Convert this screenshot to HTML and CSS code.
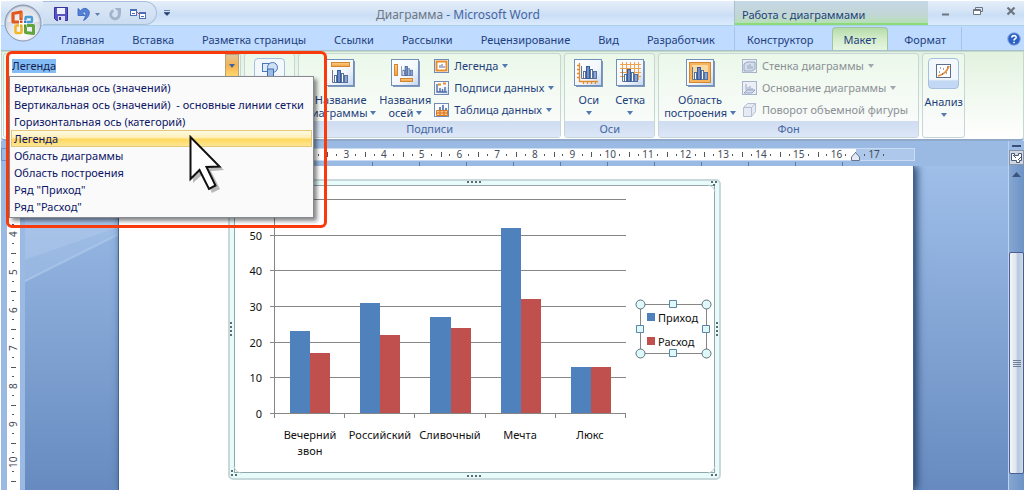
FILE: index.html
```html
<!DOCTYPE html>
<html lang="ru">
<head>
<meta charset="utf-8">
<title>Диаграмма - Microsoft Word</title>
<link rel="stylesheet" href="styles.css">
</head>
<body>
<svg class="defs" aria-hidden="true">
  <defs>
    <linearGradient id="paper" x1="0" y1="0" x2="1" y2="1"><stop offset="0" stop-color="#fff"/><stop offset=".6" stop-color="#f3f7fd"/><stop offset="1" stop-color="#c3d6f0"/></linearGradient>
    <linearGradient id="orange" x1="0" y1="0" x2="0" y2="1"><stop offset="0" stop-color="#fbd08a"/><stop offset="1" stop-color="#f0a040"/></linearGradient>
    <symbol id="sheet" viewBox="0 0 29 28"><path d="M2 27.500H28.500V2" fill="none" stroke="#8098bd" stroke-width="2"/><rect x=".5" y=".5" width="27" height="26" fill="url(#paper)" stroke="#7390bb"/></symbol>
    <symbol id="bars" viewBox="0 0 16 13"><path d="M.5 0v12.500H16" fill="none" stroke="#67778f"/><rect x="2.500" y="5.500" width="2" height="7" fill="#fff" stroke="#56719d"/><rect x="5.500" y=".5" width="3" height="12" fill="#6e8fca" stroke="#3c5c96"/><rect x="9.500" y="3.500" width="2" height="9" fill="#fff" stroke="#56719d"/><rect x="12.500" y="5.500" width="3" height="7" fill="#88a5d7" stroke="#56719d"/></symbol>
  </defs>
</svg>
<div class="window">
  <header class="chrome">
    <div class="titlebar">
      <div class="quick">
        <button class="tool" aria-label="Сохранить"><svg width="14" height="14"><path d="M.5.5h13v13h-11l-2-2z" fill="#5a55c0" stroke="#37339a"/><rect x="3" y="1" width="8" height="6" fill="#eef2ff"/><rect x="4" y="9" width="7" height="5" fill="#d6dcf4"/><rect x="5" y="10" width="2" height="3" fill="#37339a"/></svg></button>
        <button class="tool undo" aria-label="Отменить"><svg width="13" height="14"><path d="M1 1.500v7h7L5.500 6C8 3.500 10.500 6 7.500 11.500l-1 2C13.500 10 14 3 9 1.500 7 1 5 2 3.500 3.800z" fill="#5580d8" stroke="#3360b8" stroke-width=".8"/></svg></button>
        <button class="tool more" aria-label="Список отмены"><svg width="5" height="3"><path d="M0 0h5L2.500 3z" fill="#5c7db0"/></svg></button>
        <button class="tool redo" aria-label="Повторить"><svg width="12" height="13"><path d="M4.500 2.500A4.300 4.300 0 1 0 9.500 4" fill="none" stroke="#a3b3ca" stroke-width="2.800"/><path d="M5.500 0H12v6.500z" fill="#a3b3ca"/></svg></button>
        <button class="tool" aria-label="Связать надписи"><svg width="17" height="13"><rect x=".5" y="1.500" width="6" height="6" fill="#fff" stroke="#4a6fb8"/><path d="M0 2.500h7M2 5.500h3" stroke="#4a6fb8"/><rect x="9.500" y="4.500" width="6" height="6" fill="#fff" stroke="#4a6fb8"/><path d="M9 5.500h7M11 8.500h3" stroke="#4a6fb8"/><path d="M7 4l3 3" stroke="#d44"/></svg></button>
      </div>
      <button class="tool customize" aria-label="Настройка панели"><svg width="6" height="6"><path d="M0 .5h6M0 2.500h6L3 5.500z" fill="#223e72" stroke="#223e72" stroke-width=".6"/></svg></button>
      <h1 class="caption"><span class="doc">Диаграмма</span> - Microsoft Word</h1>
      <div class="context">Работа с диаграммами</div>
      <div class="controls">
        <button class="tool" aria-label="Свернуть"><svg width="9" height="10"><path d="M1 8.500h7" stroke="#6e7680" stroke-width="2"/></svg></button>
        <button class="tool" aria-label="Восстановить"><svg width="10" height="9"><path d="M2.500 2V.5h7v4H8" fill="none" stroke="#6e7680"/><path d="M.5 2.500h7v5h-7zM0 3.500h8" fill="#fff" stroke="#6e7680"/></svg></button>
        <button class="tool" aria-label="Закрыть"><svg width="10" height="9"><path d="M1.500.5l7 7M8.500.5l-7 7" stroke="#6e7680" stroke-width="2.200"/></svg></button>
      </div>
    </div>
    <nav class="tabs">
      <button class="tab">Главная</button>
      <button class="tab">Вставка</button>
      <button class="tab">Разметка страницы</button>
      <button class="tab">Ссылки</button>
      <button class="tab">Рассылки</button>
      <button class="tab">Рецензирование</button>
      <button class="tab">Вид</button>
      <button class="tab">Разработчик</button>
      <div class="chart-tabs">
        <button class="tab">Конструктор</button>
        <button class="tab active">Макет</button>
        <button class="tab">Формат</button>
      </div>
      <button class="tool help" aria-label="Справка"><svg width="14" height="14"><circle cx="7" cy="7" r="6.300" fill="#2c62c4" stroke="#8fb0e4"/><path d="M4.800 5.500C5 3 9.300 3 9.200 5.400 9 7 7 7 7 8.600M7 9.800v1.400" fill="none" stroke="#fff" stroke-width="1.600"/></svg></button>
    </nav>
    <button class="orb" aria-label="Кнопка Office"><svg width="38" height="38" viewBox="0 0 38 38">
      <defs><radialGradient id="glass" cx=".5" cy=".8" r=".8"><stop offset="0" stop-color="#fff"/><stop offset=".5" stop-color="#dfe5ef"/><stop offset="1" stop-color="#aab6ca"/></radialGradient></defs>
      <circle cx="19" cy="19" r="18" fill="url(#glass)" stroke="#8794ab"/><path d="M3 18a16 15.500 0 0 1 32 0z" fill="#fff" opacity=".5"/>
      <g fill="none" stroke-linejoin="round"><path d="M17 18H9V9.500L17 8z" stroke="#e2571c" stroke-width="3.200"/><path d="M17.500 14V9" stroke="#f07a22" stroke-width="2"/><rect x="21.500" y="13" width="6.500" height="5" rx="1" stroke="#4a9ad4" stroke-width="2.400"/><rect x="11.500" y="21.500" width="6" height="7.500" rx="1" stroke="#f3b72a" stroke-width="2.600"/><path d="M21.500 21.500h8v8L21.500 28.500z" stroke="#63a53a" stroke-width="3"/></g>
      <path d="M15 16h8v7h-8z" fill="#fff"/><path d="M16 16.500h2.500v2.500H16z" fill="#d9481c"/><path d="M20 16.500h2.500v2.500H20z" fill="#2f7cc0"/><path d="M16 20.500h2.500V23H16z" fill="#eaa51c"/><path d="M20 20.500h2.500V23H20z" fill="#4f9430"/>
    </svg></button>
  </header>

  <section class="ribbon">
    <div class="group current">
      <div class="combo">
        <input class="combo-text" role="combobox" aria-label="Элементы диаграммы" aria-expanded="true" aria-controls="elements" value="Легенда">
        <button class="combo-arrow" aria-label="Открыть список"><svg width="6" height="4"><path d="M0 0h6L3 4z" fill="#3f64a6"/></svg></button>
      </div>
      <ul class="list" id="elements" role="listbox">
        <li role="option">Вертикальная ось (значений)</li>
        <li role="option">Вертикальная ось (значений)&nbsp; - основные линии сетки</li>
        <li role="option">Горизонтальная ось (категорий)</li>
        <li role="option" class="hot" aria-selected="true">Легенда</li>
        <li role="option">Область диаграммы</li>
        <li role="option">Область построения</li>
        <li role="option">Ряд "Приход"</li>
        <li role="option">Ряд "Расход"</li>
      </ul>
      <div class="marker"></div>
      <svg class="pointer" width="38" height="60" viewBox="0 0 38 60"><path d="M4 5v43l10-9 9 19 8-4-9-18 13-1z" fill="#777" opacity=".5"/><path d="M1.500 2v42l9-9 9.500 19 6.500-3.500-9-18.500 13-.5z" fill="#fff" stroke="#111" stroke-width="2"/></svg>
    </div>
    <div class="group shapes">
      <button class="chip" aria-label="Вставить"><svg width="18" height="20"><rect x="1.500" y="2.500" width="10" height="8" fill="#dfeafa" stroke="#4878b8"/><circle cx="11.500" cy="6.500" r="5" fill="#cfdff5" stroke="#4878b8"/><path d="M6.500 8v10h6V8z" fill="#9cbce8" stroke="#3e6cae"/></svg></button>
    </div>
    <div class="group captions">
      <div class="tools labels">
        <button class="large"><svg width="29" height="28"><use href="#sheet"/><rect x="5.500" y="3.500" width="18" height="4" fill="url(#orange)" stroke="#d5852e"/><use href="#bars" x="6" y="11" width="16" height="13"/></svg><span>Название<br>диаграммы <i class="arr"></i></span></button>
        <button class="large"><svg width="29" height="28"><use href="#sheet"/><rect x="3.500" y="5.500" width="3" height="11" fill="url(#orange)" stroke="#d5852e"/><use href="#bars" x="10" y="7" width="12" height="10"/><rect x="9.500" y="19.500" width="12" height="3" fill="url(#orange)" stroke="#d5852e"/></svg><span>Названия<br>осей <i class="arr"></i></span></button>
        <div class="stack">
          <button class="small"><svg width="16" height="14"><rect x=".5" y=".5" width="14" height="13" fill="#fff" stroke="#6f8bb6"/><rect x="2.500" y="2.500" width="10" height="9" fill="none" stroke="#e88f2c" stroke-width="2"/><path d="M6 9V6M8 9V5M10 9V7" stroke="#54689c"/></svg>Легенда <i class="arr"></i></button>
          <button class="small"><svg width="16" height="14"><rect x=".5" y=".5" width="14" height="13" fill="url(#paper)" stroke="#6f8bb6"/><path d="M3 3v8h10M6 11V7M8.500 11V8M11 11V6" fill="none" stroke="#4d6ca5" stroke-width="1.400"/><path d="M4 3.500h3M9 2.500h3" stroke="#e88f2c" stroke-width="2"/></svg>Подписи данных <i class="arr"></i></button>
          <button class="small"><svg width="16" height="14"><rect x=".5" y=".5" width="14" height="13" fill="url(#paper)" stroke="#6f8bb6"/><path d="M6 8V4M9 8V2M12 8V5" stroke="#4d6ca5" stroke-width="1.600"/><path d="M2.500 7.500h11v5h-11z" fill="#f8c890" stroke="#e07c20"/><path d="M2 10h12M6 7v6M10 7v6" stroke="#d56c18"/></svg>Таблица данных <i class="arr"></i></button>
        </div>
      </div>
      <div class="name">Подписи</div>
    </div>
    <div class="group">
      <div class="tools axes">
        <button class="large"><svg width="29" height="28"><use href="#sheet"/><path d="M5.500 4v18.500H24M3 6.500h3M3 10.500h3M3 14.500h3M3 18.500h3M9.500 22v3M13.500 22v3M17.500 22v3M21.500 22v3" fill="none" stroke="#e38a2c" stroke-width="1.300"/><use href="#bars" x="7" y="7" width="16" height="13"/></svg><span>Оси<br><i class="arr"></i></span></button>
        <button class="large"><svg width="29" height="28"><use href="#sheet"/><path d="M4 5.500h21M4 9.500h21M4 13.500h21M4 17.500h21M6.500 3v18M10.500 3v18M14.500 3v18M18.500 3v18M22.500 3v18" stroke="#eda24b"/><use href="#bars" x="6" y="10" width="16" height="13"/></svg><span>Сетка<br><i class="arr"></i></span></button>
      </div>
      <div class="name">Оси</div>
    </div>
    <div class="group walls">
      <div class="tools back">
        <button class="large"><svg width="29" height="28"><use href="#sheet"/><rect x="3.500" y="3.500" width="21" height="20" fill="#f6b65e" stroke="#d5852e"/><rect x="6" y="6" width="16" height="15" fill="#fbd9a2"/><use href="#bars" x="6" y="8" width="16" height="13"/></svg><span>Область<br>построения <i class="arr"></i></span></button>
        <div class="stack">
          <button class="small" disabled><svg width="16" height="14"><rect x=".5" y=".5" width="14" height="13" fill="#eceff5" stroke="#a7b4cb"/><path d="M2 12V5l3-2h8v7l-3 2zM6 10V6M8 10V5M10 10V7" fill="#d6deeb" stroke="#94a5c2"/></svg>Стенка диаграммы <i class="arr"></i></button>
          <button class="small" disabled><svg width="16" height="14"><rect x=".5" y=".5" width="14" height="13" fill="#eceff5" stroke="#a7b4cb"/><path d="M2 12l3-3h8l-3 3zM4 9V3M6 9V6M8 9V5M10 9V7" fill="#d6deeb" stroke="#94a5c2"/></svg>Основание диаграммы <i class="arr"></i></button>
          <button class="small" disabled><svg width="16" height="14"><path d="M1.500 4.500l4-4h8v8l-4 5h-8zM1.500 4.500h8v9M9.500 4.500l4-4" fill="#e6ebf3" stroke="#b3bfd3"/></svg>Поворот объемной фигуры</button>
        </div>
      </div>
      <div class="name">Фон</div>
    </div>
    <div class="group analysis">
      <button class="large"><span class="chip"><svg width="15" height="14"><rect x=".5" y=".5" width="14" height="13" fill="#fff" stroke="#5b6e90"/><path d="M2 12C6 11 11 8 13 2" fill="none" stroke="#e88a34" stroke-width="1.600"/><path d="M3 8h1M6 10h1M7 5h1M10 9h1M11 3h1M4 4h1" stroke="#445"/></svg></span><span>Анализ<br><i class="arr"></i></span></button>
    </div>
  </section>

  <main class="work">
    <div class="desk">
      <div class="top-ruler">
        <div class="corner"></div>
        <div class="scale">
          <span></span><span></span><span>3</span><span>4</span><span>5</span><span>6</span><span>7</span><span>8</span><span>9</span><span>10</span><span>11</span><span>12</span><span>13</span><span>14</span><span>15</span><span>16</span><span>17</span>
          <svg class="indent" width="9" height="9"><path d="M.5 8.500V5l4-4.500 4 4.500v3.500z" fill="#e4ebf6" stroke="#66758f"/></svg>
        </div>
        <div class="stops"></div>
      </div>
      <div class="canvas">
        <div class="side-ruler"><span></span><span>4</span><span>5</span><span>6</span><span>7</span><span>8</span><span>9</span><span>10</span><span></span></div>
        <div class="backdrop">
          <svg class="sweep" width="94" height="120"><path d="M0 0h94v61L0 94z" fill="#c2d8f3" opacity=".4"/><path d="M0 94L94 61v6L0 115z" fill="#bdd3f0" opacity=".25"/><path d="M0 115L94 68" stroke="#bdd3f0" stroke-width="2" opacity=".5"/></svg>
          <article class="page">
            <svg class="chart" width="493" height="301" viewBox="228 179 493 301" role="img" aria-label="Диаграмма прихода и расхода">
              <rect x="229" y="180" width="491" height="299" rx="4" fill="#e8fbfb" stroke="#c8d8da" stroke-width="2"/>
              <rect x="234.500" y="185.500" width="480" height="287" fill="#fff" stroke="#93a6a9"/>
              <g fill="none" stroke="#b5cdd0"><path d="M234 192q1-6 7-7M708 185q6 1 7 7M234 466q1 6 7 7M708 473q6-1 7-7"/></g>
              <g stroke="#5d6c70" stroke-width="2" stroke-dasharray="2 2"><path d="M467 182h15M467 476h15M231 322v14M717 322v14"/><path d="M711 182h6M713 185h4M711 475h6M231 475h7M231 471h3"/></g>
              <path d="M274 199.500H626M270 235.500H626M270 270.500H626M270 306.500H626M270 342.500H626M270 377.500H626M270 413.500H626M274.500 199V418M344.500 414v4M414.500 414v4M485.500 414v4M555.500 414v4M625.500 414v4" stroke="#868686" fill="none"/>
              <path d="M290 331h20v82h-20zM360 303h20v110h-20zM430 317h21v96h-21zM501 228h20v185h-20zM571 367h20v46h-20z" fill="#4f81bd"/>
              <path d="M310 353h20v60h-20zM380 335h20v78h-20zM451 328h20v85h-20zM521 299h20v114h-20zM591 367h20v46h-20z" fill="#c0504d"/>
              <g class="values"><text x="262" y="240">50</text><text x="262" y="275">40</text><text x="262" y="311">30</text><text x="262" y="347">20</text><text x="262" y="382">10</text><text x="262" y="418">0</text></g>
              <g class="names"><text x="310" y="439">Вечерний</text><text x="310" y="455">звон</text><text x="380" y="439">Российский</text><text x="450" y="439">Сливочный</text><text x="520" y="439">Мечта</text><text x="590" y="439">Люкс</text></g>
              <rect x="640.500" y="304.500" width="66" height="49" fill="#fff" stroke="#868686"/>
              <path d="M647 313h8v8h-8z" fill="#4f81bd"/><path d="M647 337h8v8h-8z" fill="#c0504d"/>
              <text x="658" y="322">Приход</text><text x="658" y="346">Расход</text>
              <g fill="#dff8fa" stroke="#5c7378"><circle cx="640.500" cy="304.500" r="4.500"/><circle cx="706.500" cy="304.500" r="4.500"/><circle cx="640.500" cy="353.500" r="4.500"/><circle cx="706.500" cy="353.500" r="4.500"/></g>
              <g fill="#dff8fa" stroke="#5b86a6"><path d="M669.500 300.500h7v7h-7zM669.500 349.500h7v7h-7zM636.500 325.500h7v7h-7zM702.500 325.500h7v7h-7z"/></g>
            </svg>
          </article>
        </div>
      </div>
    </div>
    <aside class="scroll">
      <div class="split"></div>
      <button class="tool view" aria-label="Линейка"><svg width="13" height="12"><path d="M1.500 1.500h3v2h4v-2h3v7h-2v2h-3v-2h-5zM3 3l3 3M8 8l3-3" fill="#fff" stroke="#4a5878"/></svg></button>
      <div class="track">
        <button class="tool" aria-label="Прокрутить вверх"><svg width="9" height="5"><path d="M0 5l4.500-5L9 5z" fill="#3c547e"/></svg></button>
        <div class="thumb"></div>
      </div>
    </aside>
  </main>
</div>
</body>
</html>
```
FILE: styles.css
```css
* { box-sizing: border-box; }
body {
  margin: 0;
  height: 100vh;
  padding: 1px 2px 1px 1px;
  overflow: hidden;
  background: #fff;
  color: #1e3f7d;
  font: 11px/16px "Noto Sans", "Open Sans", sans-serif;
}
button {
  padding: 0;
  border: 0;
  background: none;
  color: inherit;
  font: inherit;
  white-space: nowrap;
}
svg { display: block; flex: none; }
.defs { position: absolute; width: 0; height: 0; }
.window { height: 100%; display: flex; flex-direction: column; background: #bfdbff; }
.tool { display: flex; align-items: center; justify-content: center; }

/* title bar and tabs */
.chrome { position: relative; }
.titlebar {
  display: flex;
  height: 25px;
  border-bottom: 1px solid #a9d0e4;
  background: linear-gradient(#e6eff9, #d5e4f6 40%, #cadef6 60%, #dcebfc);
}
.quick {
  display: flex;
  align-items: center;
  gap: 9px;
  width: 114px;
  margin-left: 42px;
  padding: 2px 0 0 11px;
  border: 1px solid #a8bedd;
  border-left: 0;
  border-radius: 0 12px 12px 0;
  background: linear-gradient(#dce8f6, #cbdcf1);
}
.more { margin-left: -4px; }
.customize { margin-left: 7px; }
.caption {
  flex: 1;
  margin: 0;
  padding: 6px 0 0 206px;
  color: #4465a2;
  font-size: 12px;
  font-weight: 400;
  line-height: 16px;
  white-space: nowrap;
}
.doc { color: #6f7783; }
.context {
  width: 194px;
  padding: 6px 7px 0;
  border-left: 1px solid #a9bfd0;
  border-bottom: 2px solid #8bdb7a;
  background: linear-gradient(#c6d7e6, #c2d6d6 60%, #b6e0b5);
  white-space: nowrap;
}
.controls { display: flex; gap: 23px; width: 96px; padding: 0 7px 4px 13px; }

.tabs {
  display: flex;
  align-items: flex-end;
  height: 25px;
  padding: 2px 3px 0 46px;
  border-bottom: 1px solid #a6c0c6;
}
.tab { height: 23px; padding: 2px 14px 0; }
.chart-tabs {
  display: flex;
  width: 228px;
  margin-left: auto;
  border-left: 1px solid #a4c4e2;
  border-right: 1px solid #a4c4e2;
}
.chart-tabs .tab { padding: 2px 16px 0; }
.chart-tabs .tab:first-child { padding: 2px 18px 0 12px; }
.chart-tabs .tab.active {
  padding: 1px 11px 0;
  border: 1px solid #9ec4a0;
  border-bottom: 0;
  border-radius: 4px 4px 0 0;
  background: linear-gradient(#b5dcaa, #d4ecca 50%, #e6f6e2);
}
.help { height: 22px; margin-left: 45px; }
.orb { position: absolute; left: 3px; top: 3px; }

/* ribbon */
.ribbon {
  position: relative;
  display: flex;
  gap: 3px;
  padding: 1px;
  border: 1px solid #c3d9cd;
  border-bottom: 2px solid #8fa9c9;
  border-radius: 0 0 4px 4px;
  background: linear-gradient(#e2f2df, #eef8ec 40%, #fff);
}
.group {
  display: flex;
  flex-direction: column;
  justify-content: space-between;
  height: 85px;
  border: 1px solid #c6d5d6;
  border-radius: 3px;
  background: linear-gradient(#eaf8e9, #f3faf2 40%, #fbfcfd);
}
.current { width: 238px; padding-left: 6px; }
.shapes { width: 51px; padding: 4px 9px; }
.captions { min-width: 261px; }
.walls { min-width: 261px; }
.name {
  height: 16px;
  color: #4465a2;
  background: linear-gradient(#cfdcf0, #dce7f8);
  text-align: center;
  line-height: 15px;
}
.tools { display: flex; align-items: flex-start; padding-top: 5px; }
.labels { gap: 3px; padding-left: 6px; padding-right: 6px; }
.axes { gap: 12px; padding-left: 9px; padding-right: 9px; }
.back { gap: 6px; padding-left: 5px; padding-right: 6px; }
.large { display: flex; flex-direction: column; align-items: center; gap: 6px; line-height: 13px; }
.stack { display: flex; flex-direction: column; margin-top: -4px; }
.small { display: flex; align-items: center; gap: 4px; height: 22px; }
.small:disabled { color: #8c9096; }
.arr {
  display: inline-block;
  border: 3px solid transparent;
  border-top: 4px solid #5478b2;
  border-bottom: 0;
  vertical-align: 2px;
}
.small:disabled .arr { border-top-color: #a1a7b0; }
.chip {
  display: flex;
  align-items: center;
  justify-content: center;
  width: 31px;
  height: 31px;
  padding-bottom: 6px;
  border: 1px solid #a5c0dd;
  border-radius: 4px;
  background: linear-gradient(#f2f8fb 70%, #c2d8f4 76%);
}
.analysis { min-width: 43px; padding: 4px 0; justify-content: flex-start; }

/* element picker */
.combo { display: flex; height: 23px; width: 229px; }
.combo-text {
  flex: 1;
  min-width: 0;
  padding: 0 2px;
  border: 0;
  background: linear-gradient(#83bbf5, #83bbf5) 2px 5px / 44px 14px no-repeat #fff;
  color: #16234d;
  font: 11px/16px "Noto Sans", sans-serif;
}
.combo-arrow {
  display: flex;
  align-items: center;
  justify-content: center;
  width: 14px;
  border: 1px solid #b9a376;
  background: linear-gradient(#e0c49a, #f6b450 50%, #ffd771);
}
.list {
  position: absolute;
  z-index: 2;
  left: 7px;
  top: 24px;
  width: 305px;
  margin: 0;
  padding: 2px 1px;
  border: 1px solid #858a92;
  background: #fafafa;
  box-shadow: 3px 3px 4px #0007;
  color: #0c1566;
  list-style: none;
}
.list li { height: 17px; padding: 0 2px; border: 1px solid transparent; line-height: 15px; white-space: nowrap; }
.list .hot { border-color: #e2c877; background: linear-gradient(#fffbe2, #ffeeb2 48%, #ffd75a 52%, #ffe694); }
.marker {
  position: absolute;
  z-index: 1;
  left: 4px;
  top: -1px;
  width: 321px;
  height: 177px;
  border: 3px solid #f93a0c;
  border-radius: 6px;
}
.pointer { position: absolute; z-index: 3; left: 187px; top: 83px; }

/* document area */
.work { flex: 1; min-height: 0; display: flex; background: #9bbae3; }
.desk { flex: 1; min-width: 0; display: flex; flex-direction: column; }
.top-ruler { display: grid; grid-template-columns: 250px 664px; grid-template-rows: 13px 5px; padding-top: 7px; }
.corner { width: 20px; border: 1px solid #6d95cc; }
.scale {
  position: relative;
  display: flex;
  padding-right: 21px;
  border: 1px solid #c9dcf3;
  background: linear-gradient(90deg, #fff 604px, #adc8ea 604px);
  color: #444c58;
  font: 10px/11px "Noto Sans", sans-serif;
}
.scale span {
  flex: 1;
  text-align: center;
  background:
    linear-gradient(#555, #555) 0 50% / 1px 5px no-repeat,
    linear-gradient(#555, #555) 24% 50% / 1px 2px no-repeat,
    linear-gradient(#555, #555) 76% 50% / 1px 2px no-repeat;
}
.indent { position: absolute; left: 599px; top: 3px; }
.stops {
  grid-column: 2;
  margin: 1px 69px 0 27px;
  background: repeating-linear-gradient(90deg, #5f7ba8 0 1px, transparent 1px 47px);
}
.canvas { flex: 1; min-height: 0; display: flex; }
.side-ruler {
  width: 24px;
  padding-top: 11px;
  overflow: hidden;
  background: linear-gradient(90deg, #9bbae3 6px, #fff 6px 19px, #9bbae3 19px);
  color: #444c58;
  font: 10px/13px "Noto Sans", sans-serif;
}
.side-ruler span {
  display: block;
  width: 13px;
  height: 38px;
  margin-left: 6px;
  writing-mode: vertical-rl;
  transform: rotate(180deg);
  text-align: center;
  background:
    linear-gradient(#555, #555) 50% 100% / 5px 1px no-repeat,
    linear-gradient(#555, #555) 50% 24% / 2px 1px no-repeat,
    linear-gradient(#555, #555) 50% 76% / 2px 1px no-repeat;
}
.backdrop { position: relative; flex: 1; min-width: 0; overflow: hidden; background: linear-gradient(#9fbfe9, #678bc0); }
.sweep { position: absolute; left: 0; top: 0; }
.page {
  position: relative;
  width: 796px;
  height: 100%;
  margin-left: 93px;
  padding: 13px 0 0 109px;
  border-left: 1px solid #47648c;
  border-right: 1px solid #47648c;
  background: #fff;
  box-shadow: 3px 0 8px #23406b;
}
.chart text { fill: #111; font: 11px "Noto Sans", sans-serif; }
.chart .values text { text-anchor: end; }
.chart .names text { text-anchor: middle; }

/* scroll bar */
.scroll { width: 16px; display: flex; flex-direction: column; border-left: 1px solid #bcd2ee; }
.split { height: 2px; margin: 4px 3px 3px; background: #3a4d78; }
.view { height: 15px; border: 1px solid #8693a8; background: #d2d8e2; }
.track { flex: 1; display: flex; flex-direction: column; align-items: center; padding-top: 7px; background: linear-gradient(90deg, #86a6d2, #6d93c6); }
.thumb {
  align-self: stretch;
  height: 222px;
  margin-top: 75px;
  border: 1px solid #4b5f95;
  border-radius: 2px;
  background:
    repeating-linear-gradient(#71809a 0 1px, transparent 1px 2px) 50% 50% / 8px 7px no-repeat,
    linear-gradient(90deg, #f2f5f8, #dfe5ee 45%, #b5c7df 60%, #cfdbea);
}
```
